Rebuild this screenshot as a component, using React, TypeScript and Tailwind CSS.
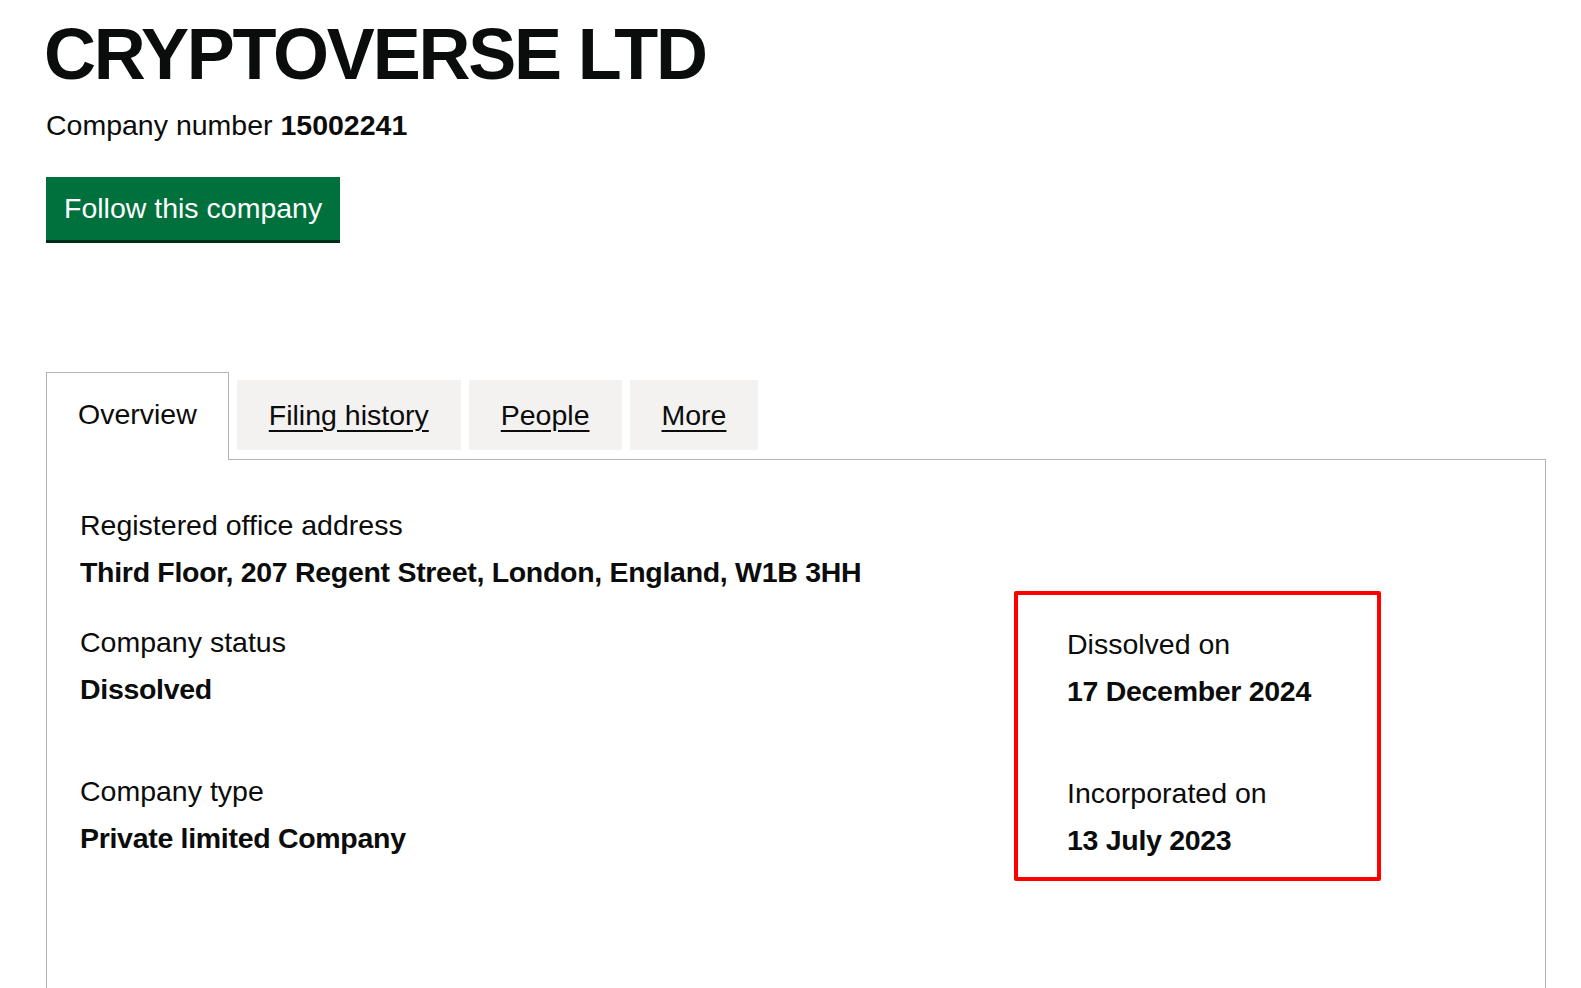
const text = 'text-[28.5px] leading-[37px]';

function Field({ label, value, className = '' }: { label: string; value: string; className?: string }) {
  return (
    <div className={className}>
      <div className={text}>{label}</div>
      <div className={`${text} mt-[10px] font-bold tracking-[-0.3px]`}>{value}</div>
    </div>
  );
}

const tabs = ['Filing history', 'People', 'More'];

export default function App() {
  return (
    <div className="min-h-screen bg-white pl-[46px] pr-[35px] pt-[18px] text-[#0b0c0c] font-['Liberation_Sans',Arial,sans-serif] overflow-hidden">
      <h1 className="-ml-[2px] text-[72px] leading-[72px] font-bold tracking-[-2.2px]">CRYPTOVERSE LTD</h1>
      <p className={`mt-[17px] ${text}`}>
        Company number <strong className="font-bold">15002241</strong>
      </p>
      <button className="mt-[33px] block h-[63px] px-[18px] bg-[#00703c] text-white text-[28.5px] leading-[37px] shadow-[0_3px_0_#002d18]">
        Follow this company
      </button>

      {/* tab strip */}
      <ul className="mt-[132px] flex items-start">
        <li className="relative z-10 -mb-px h-[88px] border border-b-0 border-[#b1b4b6] bg-white px-[31px] pt-[23px]">
          <span className={text}>Overview</span>
        </li>
        {tabs.map((t) => (
          <li key={t} className="ml-[8px] mt-[8px] flex h-[70px] items-center bg-[#f3f2f1] px-[32px]">
            <a href="#" className={`${text} underline decoration-[length:1.5px] underline-offset-[5px]`}>
              {t}
            </a>
          </li>
        ))}
      </ul>

      {/* overview panel */}
      <div className="min-h-[560px] border border-[#b1b4b6] pl-[33px] pt-[47px]">
        <Field label="Registered office address" value="Third Floor, 207 Regent Street, London, England, W1B 3HH" />
        <div className="grid grid-cols-[934px_367px] items-start">
          <div className="pt-[33px]">
            <Field label="Company status" value="Dissolved" />
            <Field className="mt-[65px]" label="Company type" value="Private limited Company" />
          </div>
          <div className="rounded-[2px] border-[4px] border-[#ff0000] pl-[49px] pt-[31px] pb-[18px]">
            <Field label="Dissolved on" value="17 December 2024" />
            <Field className="mt-[65px]" label="Incorporated on" value="13 July 2023" />
          </div>
        </div>
      </div>
    </div>
  );
}
